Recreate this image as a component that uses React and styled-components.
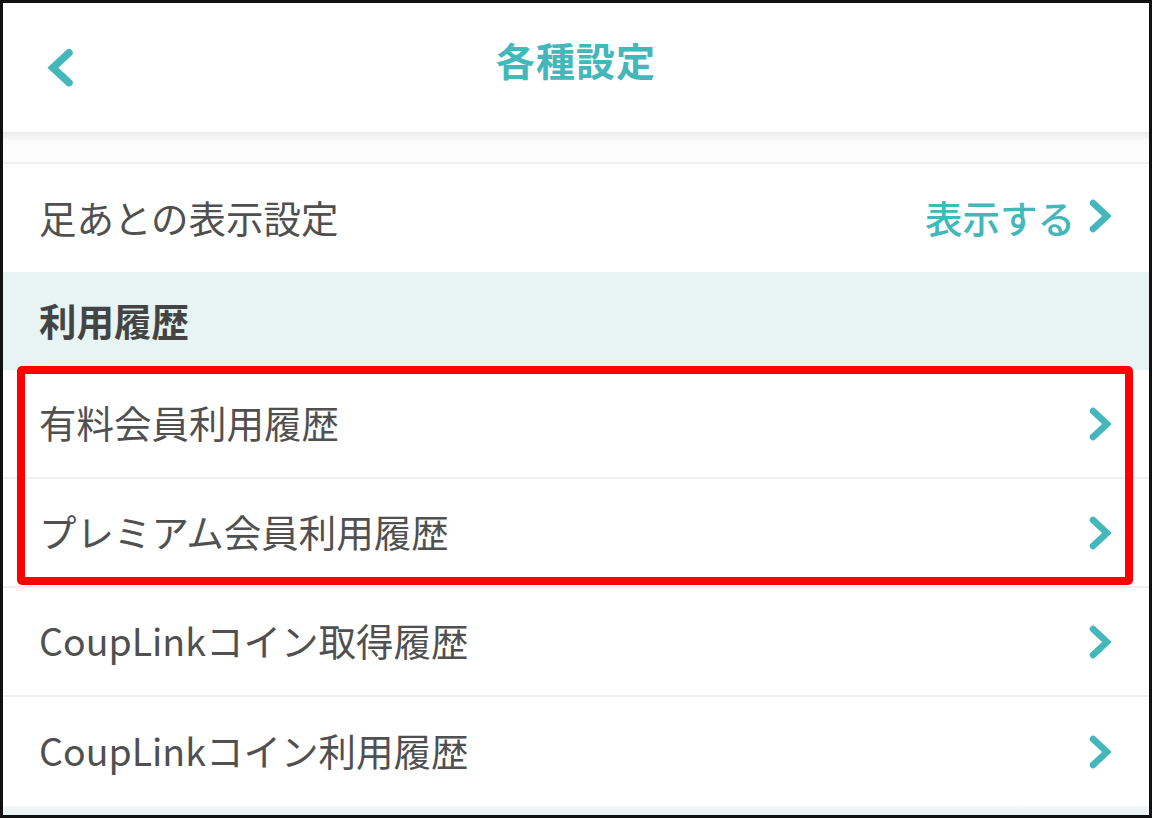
import React from 'react';
import styled, { createGlobalStyle } from 'styled-components';

const colors = {
  teal: '#43b7ba',
  text: '#505050',
  sectionBg: '#e7f4f3',
  line: '#f0f0f0',
};

const GlobalStyle = createGlobalStyle`
  html, body {
    margin: 0;
    padding: 0;
    background: #fff;
  }
  body {
    font-family: "Noto Sans CJK JP", "Noto Sans", sans-serif;
  }
`;

const Frame = styled.div`
  position: relative;
  box-sizing: border-box;
  width: 1152px;
  height: 818px;
  border: 3px solid #111;
  display: flex;
  flex-direction: column;
  overflow: hidden;
  background: #fff;
`;

const Header = styled.header`
  height: 129px;
  flex: none;
  display: grid;
  grid-template-columns: 120px 1fr 120px;
  align-items: center;
`;

const BackButton = styled.button`
  border: 0;
  background: none;
  padding: 0 0 0 43px;
  margin-top: 0;
  display: flex;
  align-items: center;
  cursor: pointer;
`;

const Title = styled.h1`
  margin: 0 0 18px;
  text-align: center;
  font-size: 39px;
  font-weight: 700;
  color: ${colors.teal};
  letter-spacing: 1px;
`;

const HeaderShadow = styled.div`
  height: 30px;
  flex: none;
  background: linear-gradient(#ececec 0, #f3f3f3 6px, #fcfcfc 9px, #fdfdfd 100%);
  border-bottom: 2px solid ${colors.line};
`;

const Row = styled.div`
  height: ${props => props.$height || 107}px;
  flex: none;
  box-sizing: border-box;
  display: flex;
  align-items: center;
  justify-content: space-between;
  padding: 0 36px 0 36px;
  background: ${props => (props.$section ? colors.sectionBg : '#fff')};
  border-bottom: ${props => (props.$last ? 'none' : `2px solid ${colors.line}`)};
`;

const Label = styled.span`
  font-size: 37.5px;
  color: ${props => (props.$bold ? '#444' : colors.text)};
  font-weight: ${props => (props.$bold ? 700 : 400)};
  margin-top: -4px;
`;

const Action = styled.span`
  display: flex;
  align-items: center;
  gap: 12px;
  font-size: 37.5px;
  font-weight: 500;
  color: ${colors.teal};
  margin-top: -4px;
`;

const BottomBand = styled.div`
  flex: 1;
  background: linear-gradient(#f3f7f7, #e9f3f3);
`;

const Highlight = styled.div`
  position: absolute;
  left: 14px;
  top: 363px;
  width: 1116px;
  height: 219px;
  box-sizing: border-box;
  border: 8px solid #ff0000;
  border-radius: 5px;
  pointer-events: none;
`;

const Chevron = ({ dir = 'right', size = 1 }) => {
  const w = 26 * size;
  const h = 36 * size;
  const points = dir === 'right' ? '6,5 20,18 6,31' : '20,5 6,18 20,31';
  return (
    <svg width={w} height={h} viewBox="0 0 26 36">
      <polyline
        points={points}
        fill="none"
        stroke={colors.teal}
        strokeWidth="6.5"
        strokeLinecap="round"
        strokeLinejoin="miter"
      />
    </svg>
  );
};

const historyItems = [
  'CoupLinkコイン取得履歴',
  'CoupLinkコイン利用履歴',
];

const App = () => {
  return (
    <>
      <GlobalStyle />
      <Frame>
        <Header>
          <BackButton aria-label="戻る">
            <Chevron dir="left" size={1.15} />
          </BackButton>
          <Title>各種設定</Title>
          <span />
        </Header>
        <HeaderShadow />
        <Row $height={108} $last>
          <Label>足あとの表示設定</Label>
          <Action>
            表示する
            <Chevron />
          </Action>
        </Row>
        <Row $section $height={98} $last>
          <Label $bold>利用履歴</Label>
        </Row>
        <Row $height={109}>
          <Label>有料会員利用履歴</Label>
          <Chevron />
        </Row>
        <Row $height={109}>
          <Label>プレミアム会員利用履歴</Label>
          <Chevron />
        </Row>
        {historyItems.map((item, i) => (
          <Row key={item} $height={109} $last={i === historyItems.length - 1}>
            <Label>{item}</Label>
            <Chevron />
          </Row>
        ))}
        <BottomBand />
        <Highlight />
      </Frame>
    </>
  );
};

export default App;
